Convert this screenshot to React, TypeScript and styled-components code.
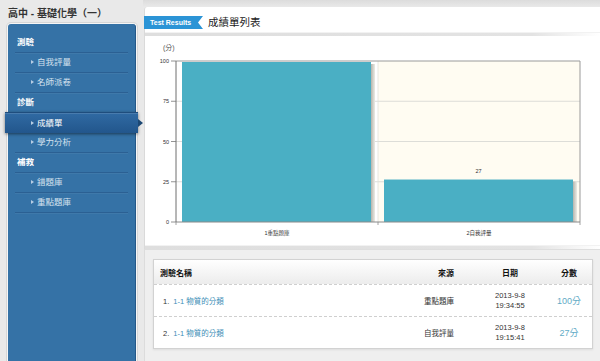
import React from "react";
import styled, { createGlobalStyle, css } from "styled-components";

const FONT = `"Liberation Sans", "Noto Sans CJK TC", sans-serif`;

const GlobalStyle = createGlobalStyle`
  html, body { margin: 0; padding: 0; }
  body { background: #e9e9e9; font-family: ${FONT}; color: #333; }
  #root { width: 600px; height: 361px; overflow: hidden; }
`;

const Page = styled.div`
  display: flex;
  width: 600px;
  height: 361px;
  overflow: hidden;
  background: #e9e9e9;
`;

const LeftCol = styled.aside`
  width: 143px;
  flex: none;
  box-sizing: border-box;
  padding: 0 6px 0 7px;
  display: flex;
  flex-direction: column;
`;

const CourseTitle = styled.h1`
  margin: 0;
  padding: 5px 0 0 1px;
  height: 18px;
  line-height: 18px;
  font-size: 10px;
  font-weight: 700;
  color: #333;
  white-space: nowrap;
`;

const Sidebar = styled.nav`
  flex: 1;
  background: #3572a6;
  border: 1px solid #f6f6f6;
  border-bottom: none;
  border-radius: 4px 4px 0 0;
  box-shadow: inset -1px 0 0 #245888, 0 0 0 1px #d6d6d6;
  padding-top: 9px;
`;

const NavList = styled.ul`
  margin: 0;
  padding: 0;
  list-style: none;
`;

const NavRow = styled.li<{ $kind: "section" | "item"; $active?: boolean }>`
  position: relative;
  height: 19px;
  line-height: 19px;
  margin: 0 8px 0 7px;
  border-bottom: 1px solid #2b6093;
  box-shadow: 0 1px 0 rgba(255, 255, 255, 0.05);
  font-size: 8.5px;
  white-space: nowrap;
  color: ${(p) => (p.$kind === "section" ? "#ffffff" : "#d5e2ef")};
  font-weight: ${(p) => (p.$kind === "section" ? 700 : 400)};
  padding-left: ${(p) => (p.$kind === "section" ? "2px" : "16px")};
  ${(p) =>
    p.$active &&
    css`
      margin: 0 -2px 0 -3px;
      padding-left: 26px;
      height: 20px;
      line-height: 20px;
      border-bottom: none;
      border-top: 1px solid #1f4d7d;
      margin-top: -1px;
      background: linear-gradient(#306aa3, #22568c);
      box-shadow: 0 1px 3px rgba(0, 0, 0, 0.5), inset 0 1px 0 rgba(255, 255, 255, 0.12);
      color: #ffffff;
      &::after {
        content: "";
        position: absolute;
        right: -5px;
        top: 50%;
        margin-top: -4px;
        border-left: 5px solid #1c4874;
        border-top: 4px solid transparent;
        border-bottom: 4px solid transparent;
      }
    `}
`;

const Marker = styled.span`
  display: inline-block;
  width: 0;
  height: 0;
  border-left: 3px solid #b8cde3;
  border-top: 2.5px solid transparent;
  border-bottom: 2.5px solid transparent;
  margin-right: 3px;
  vertical-align: middle;
  position: relative;
  top: -1px;
`;

const RightCol = styled.main`
  flex: 1;
  display: flex;
  flex-direction: column;
  padding-top: 7px;
  background: linear-gradient(#dcdcdc, #e7e7e7 6px, #e9e9e9 7px);
  min-width: 0;
`;

const TopCard = styled.section`
  margin-left: 1px;
  background: #ffffff;
  border-left: 1px solid #dadada;
  border-top-left-radius: 3px;
  display: flex;
  flex-direction: column;
`;

const CardHeader = styled.header`
  height: 17px;
  padding-top: 9px;
  display: flex;
  align-items: flex-start;
`;

const Tag = styled.span`
  margin-left: -1px;
  width: 53px;
  height: 13px;
  line-height: 13px;
  padding-left: 6px;
  background: #2b94d6;
  color: #ffffff;
  font-size: 7px;
  font-weight: 700;
  white-space: nowrap;
  clip-path: polygon(0 0, 100% 0, calc(100% - 5px) 50%, 100% 100%, 0 100%);
`;

const CardTitle = styled.h2`
  margin: 0 0 0 5px;
  line-height: 13px;
  font-size: 10.5px;
  font-weight: 400;
  color: #222;
`;

const Rule = styled.div`
  height: 3px;
  background: linear-gradient(to right, #dedede, #e3e3e3 85%, rgba(255, 255, 255, 0));
  box-shadow: 0 -1px 0 #f2f2f2;
`;

const ChartBox = styled.div`
  height: 210px;
  svg {
    display: block;
  }
`;

const BottomPanel = styled.section`
  flex: 1;
  margin-left: 1px;
  background: #efefef;
  border-top: 1px solid #dedede;
  border-left: 1px solid #dcdcdc;
  padding: 9px 7px 0 8px;
`;

const TableCard = styled.div`
  background: #ffffff;
  border: 1px solid #d2d2d2;
  box-shadow: 0 1px 2px rgba(0, 0, 0, 0.08);
`;

const GridRow = styled.div<{ $head?: boolean; $last?: boolean }>`
  display: grid;
  grid-template-columns: 1fr 80px 72px 46px;
  align-items: center;
  height: ${(p) => (p.$head ? "24px" : "31px")};
  border-bottom: ${(p) => (p.$last ? "none" : "1px dashed #cfcfcf")};
  background: ${(p) => (p.$head ? "linear-gradient(#ffffff, #ececec)" : "#ffffff")};
  font-size: ${(p) => (p.$head ? "8px" : "7.5px")};
  font-weight: ${(p) => (p.$head ? 700 : 400)};
  color: ${(p) => (p.$head ? "#111" : "#333")};
`;

const Cell = styled.div<{ $align?: "left" | "right" | "center"; $pad?: string }>`
  text-align: ${(p) => p.$align || "left"};
  padding: ${(p) => p.$pad || "0"};
  white-space: nowrap;
`;

const Link = styled.a`
  color: #3d8db6;
  text-decoration: none;
  margin-left: 4px;
`;

const DateText = styled.div`
  line-height: 10px;
`;

const Score = styled.span`
  font-size: 9px;
  color: #62abc6;
`;

const menu: { kind: "section" | "item"; label: string; active?: boolean }[] = [
  { kind: "section", label: "測驗" },
  { kind: "item", label: "自我評量" },
  { kind: "item", label: "名師派卷" },
  { kind: "section", label: "診斷" },
  { kind: "item", label: "成績單", active: true },
  { kind: "item", label: "學力分析" },
  { kind: "section", label: "補救" },
  { kind: "item", label: "錯題庫" },
  { kind: "item", label: "重點題庫" },
];

const results = [
  { no: 1, name: "1-1 物質的分類", source: "重點題庫", date: "2013-9-8", time: "19:34:55", score: 100 },
  { no: 2, name: "1-1 物質的分類", source: "自我評量", date: "2013-9-8", time: "19:15:41", score: 27 },
];

const bars = [
  { label: "1重點題庫", value: 100 },
  { label: "2自我評量", value: 27 },
];

function Chart() {
  const left = 176;
  const right = 580;
  const top = 61;
  const bottom = 222;
  const h = bottom - top;
  const band = (right - left) / bars.length;
  const yOf = (v: number) => bottom - (v / 100) * h;
  const ticks = [0, 25, 50, 75, 100];
  return (
    <svg width="455" height="210" viewBox="145 36 455 210" fontFamily={FONT}>
      <defs>
        <linearGradient id="shadow" x1="0" x2="1" y1="0" y2="0">
          <stop offset="0" stopColor="#b5b5ad" />
          <stop offset="1" stopColor="#ecece6" />
        </linearGradient>
      </defs>
      <text x="163" y="50" fontSize="7" fill="#555">(分)</text>
      <rect x={left} y={top} width={band} height={h} fill="#ffffff" />
      <rect x={left + band} y={top} width={band} height={h} fill="#fffcf2" />
      {ticks.slice(1, 4).map((t) => (
        <line key={t} x1={left} x2={right} y1={yOf(t)} y2={yOf(t)} stroke="#d4d4d0" strokeWidth="0.8" />
      ))}
      <line x1={left + band} x2={left + band} y1={top} y2={bottom} stroke="#e2e2dc" strokeWidth="0.8" />
      {bars.map((b, i) => {
        const x0 = left + band * i + 6;
        const w = band - 13;
        const y = yOf(b.value);
        return (
          <g key={b.label}>
            <rect x={x0 + w} y={y + 3} width={4} height={bottom - y - 3} fill="url(#shadow)" />
            <rect x={x0} y={y + 1} width={w} height={bottom - y - 1} fill="#4aafc4" />
            {b.value < 100 && (
              <text x={x0 + w / 2} y={y - 6} fontSize="5.5" fill="#333" textAnchor="middle">
                {b.value}
              </text>
            )}
            <text x={left + band * i + band / 2} y={235} fontSize="5.5" fill="#333" textAnchor="middle">
              {b.label}
            </text>
          </g>
        );
      })}
      <line x1={left} x2={right} y1={top} y2={top} stroke="#9a9a9a" strokeWidth="1" />
      <line x1={right} x2={right} y1={top} y2={bottom} stroke="#9a9a9a" strokeWidth="1" />
      <line x1={left} x2={right} y1={bottom} y2={bottom} stroke="#8a8a8a" strokeWidth="1" />
      <line x1={left} x2={left} y1={top} y2={bottom} stroke="#6f6f6f" strokeWidth="1" />
      {ticks.map((t) => (
        <g key={t}>
          <line x1={left - 5} x2={left} y1={yOf(t)} y2={yOf(t)} stroke="#777" strokeWidth="0.8" />
          <text x={left - 7} y={yOf(t) + 2} fontSize="5.5" fill="#333" textAnchor="end">
            {t}
          </text>
        </g>
      ))}
      {[0, 1, 2].map((i) => (
        <line key={i} x1={left + band * i} x2={left + band * i} y1={bottom} y2={bottom + 3} stroke="#8a8a8a" strokeWidth="0.8" />
      ))}
    </svg>
  );
}

export default function App() {
  return (
    <>
      <GlobalStyle />
      <Page>
        <LeftCol>
          <CourseTitle>高中 - 基礎化學（一）</CourseTitle>
          <Sidebar>
            <NavList>
              {menu.map((m) => (
                <NavRow key={m.label} $kind={m.kind} $active={m.active}>
                  {m.kind === "item" && <Marker />}
                  {m.label}
                </NavRow>
              ))}
            </NavList>
          </Sidebar>
        </LeftCol>
        <RightCol>
          <TopCard>
            <CardHeader>
              <Tag>Test Results</Tag>
              <CardTitle>成績單列表</CardTitle>
            </CardHeader>
            <Rule />
            <ChartBox>
              <Chart />
            </ChartBox>
            <Rule />
          </TopCard>
          <BottomPanel>
            <TableCard>
              <GridRow $head>
                <Cell $pad="0 0 0 6px">測驗名稱</Cell>
                <Cell $align="right" $pad="0 20px 0 0">來源</Cell>
                <Cell $align="center">日期</Cell>
                <Cell $align="center">分數</Cell>
              </GridRow>
              {results.map((r, i) => (
                <GridRow key={r.no} $last={i === results.length - 1}>
                  <Cell $pad="0 0 0 9px">
                    {r.no}.<Link href="#">{r.name}</Link>
                  </Cell>
                  <Cell $align="right" $pad="0 20px 0 0">{r.source}</Cell>
                  <Cell $align="center">
                    <DateText>{r.date}</DateText>
                    <DateText>{r.time}</DateText>
                  </Cell>
                  <Cell $align="center">
                    <Score>{r.score}分</Score>
                  </Cell>
                </GridRow>
              ))}
            </TableCard>
          </BottomPanel>
        </RightCol>
      </Page>
    </>
  );
}
